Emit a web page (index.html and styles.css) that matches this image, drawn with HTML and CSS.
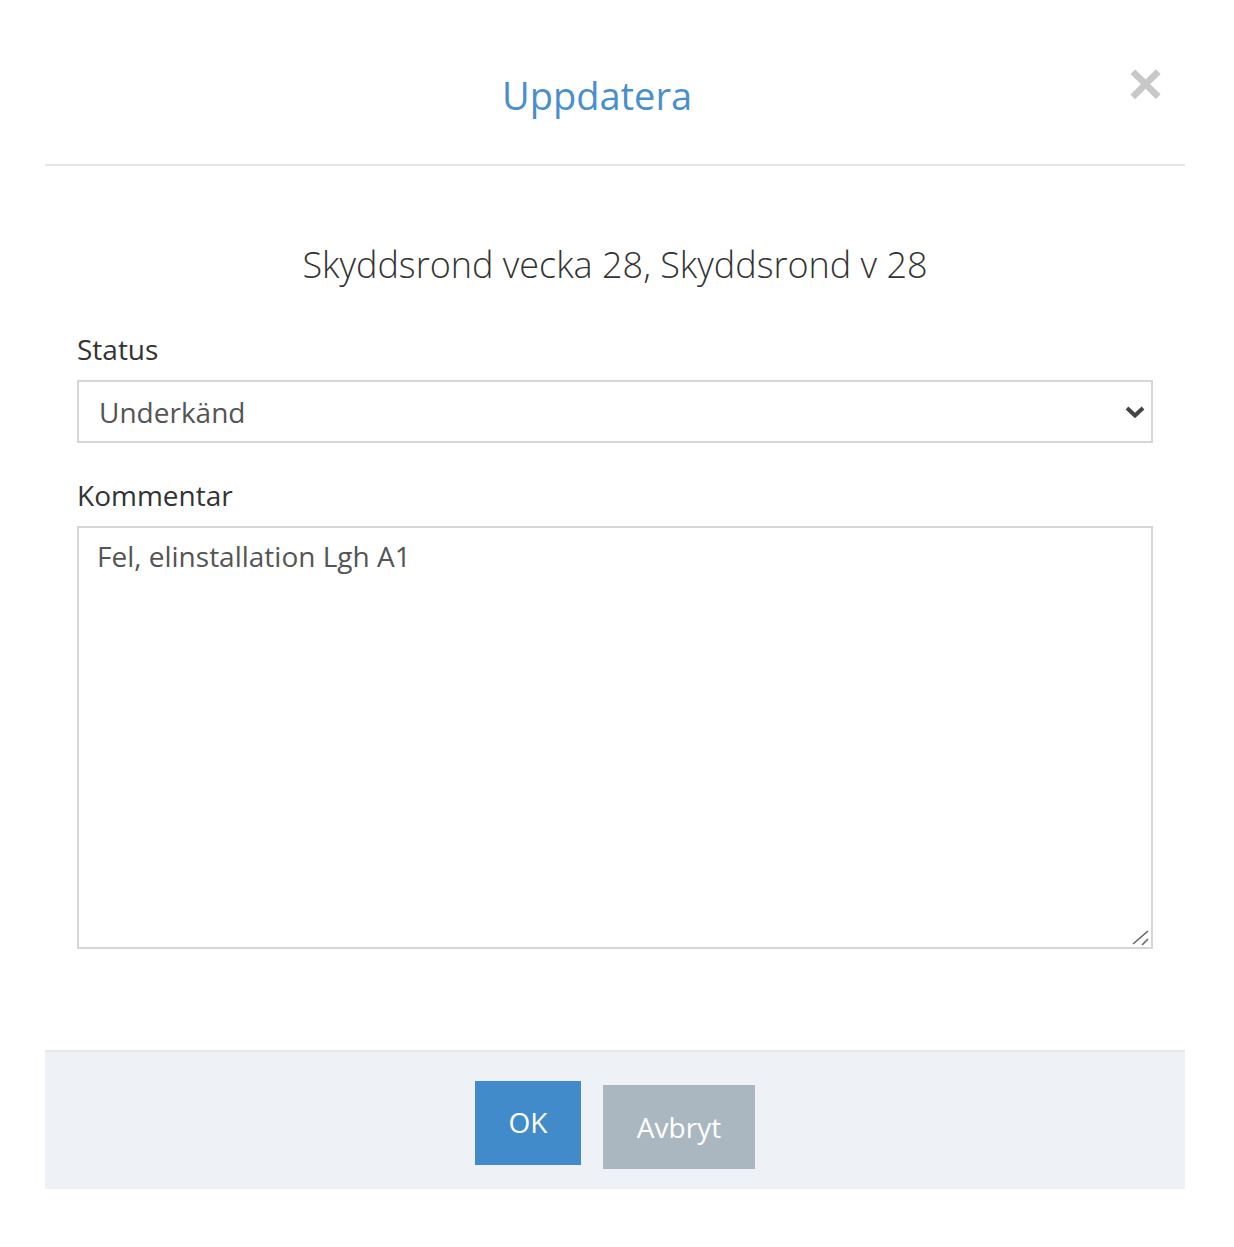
FILE: index.html
```html
<!DOCTYPE html>
<html lang="en">
<head>
    <meta charset="UTF-8">
    <meta name="viewport" content="width=device-width, initial-scale=1.0">
    <title>Uppdatera</title>
    <link rel="stylesheet" href="styles.css">
</head>
<body>
    <div class="modal">
        <!-- Header with title and close button -->
        <div class="modal-header">
            <h1 class="modal-title">Uppdatera</h1>
            <button class="close" type="button" aria-label="Stäng">&times;</button>
        </div>

        <div class="modal-body">
            <h2 class="subtitle">Skyddsrond vecka 28, Skyddsrond v 28</h2>

            <div class="form-group">
                <label for="status">Status</label>
                <div class="field-wrap">
                    <select id="status">
                        <option>Godkänd</option>
                        <option selected>Underkänd</option>
                    </select>
                    <svg class="chevron" width="22" height="16" viewBox="0 0 22 16">
                        <path d="M3 4 L11 11.5 L19 4" fill="none" stroke="#444" stroke-width="4"/>
                    </svg>
                </div>
            </div>

            <div class="form-group">
                <label for="comment">Kommentar</label>
                <div class="field-wrap">
                    <textarea id="comment">Fel, elinstallation Lgh A1</textarea>
                    <!-- resize grip -->
                    <svg class="grip" width="20" height="20" viewBox="0 0 20 20">
                        <path d="M2 17 L17 4 M11 18 L17 12" fill="none" stroke="#666" stroke-width="1.6"/>
                    </svg>
                </div>
            </div>
        </div>

        <!-- Footer buttons -->
        <div class="modal-footer">
            <button class="btn btn-primary" type="button">OK</button>
            <button class="btn btn-default" type="button">Avbryt</button>
        </div>
    </div>
</body>
</html>
```

FILE: styles.css
```css
body {
    font-family: "Open Sans", Arial, sans-serif;
    margin: 0;
    padding: 0;
    background-color: #fff;
    color: #333;
}
.modal {
    width: 1140px;
    margin-left: 45px;
}
.modal-header {
    position: relative;
    height: 164px;
    border-bottom: 2px solid #e5e5e5;
    display: flex;
    justify-content: center;
}
.modal-title {
    margin: 69px 36px 0 0;
    font-size: 38px;
    font-weight: 400;
    line-height: 52px;
    color: #4a8fcd;
}
.close {
    position: absolute;
    right: 22px;
    top: 57px;
    background: none;
    border: none;
    padding: 0;
    font-family: Arial, sans-serif;
    font-size: 60px;
    font-weight: 700;
    line-height: 54px;
    color: #c8c8c8;
    cursor: pointer;
}
.modal-body {
    box-sizing: border-box;
    padding: 73px 32px 0;
    height: 884px;
}
.subtitle {
    margin: 0 0 38px;
    text-align: center;
    font-size: 36px;
    font-weight: 300;
    line-height: 52px;
    color: #333;
}
.form-group {
    margin-bottom: 32px;
}
label {
    display: block;
    font-size: 28px;
    line-height: 40px;
    margin-bottom: 11px;
    color: #333;
}
.field-wrap {
    position: relative;
}
select {
    display: block;
    box-sizing: border-box;
    width: 100%;
    height: 63px;
    padding: 0 20px;
    border: 2px solid #d6d6d6;
    border-radius: 0;
    background: #fff;
    font-family: inherit;
    font-size: 28px;
    color: #555;
    -webkit-appearance: none;
    appearance: none;
}
.chevron {
    position: absolute;
    right: 7px;
    top: 24px;
    pointer-events: none;
}
textarea {
    display: block;
    box-sizing: border-box;
    width: 100%;
    height: 423px;
    padding: 8px 18px;
    border: 2px solid #d6d6d6;
    border-radius: 0;
    font-family: inherit;
    font-size: 28px;
    line-height: 40px;
    color: #555;
    resize: none;
}
.grip {
    position: absolute;
    right: 2px;
    bottom: 2px;
    pointer-events: none;
}
.modal-footer {
    box-sizing: border-box;
    height: 139px;
    background-color: #eef2f6;
    border-top: 2px solid #e3e8ee;
    display: flex;
    justify-content: center;
    align-items: flex-start;
    gap: 22px;
    padding-top: 29px;
}
.btn {
    border: none;
    font-family: inherit;
    font-size: 28px;
    color: #fff;
    cursor: pointer;
}
.btn-primary {
    width: 106px;
    height: 84px;
    background-color: #428bca;
    padding-bottom: 4px;
}
.btn-default {
    width: 152px;
    height: 84px;
    margin-top: 4px;
    background-color: #aab7c1;
}
```
